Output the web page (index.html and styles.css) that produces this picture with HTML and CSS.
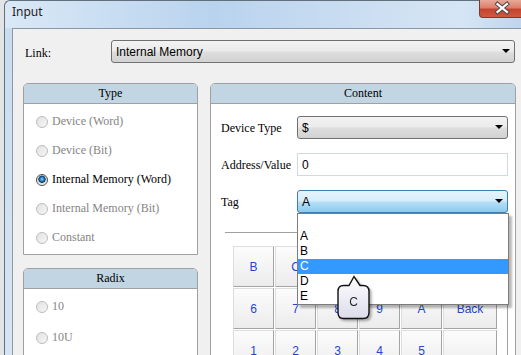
FILE: index.html
```html
<!DOCTYPE html>
<html lang="en">

<head>
    <meta charset="UTF-8">
    <title>Input</title>
    <link rel="stylesheet" href="styles.css">
</head>

<body>
    <div class="window">
        <div class="titlebar">
            <span class="title">Input</span>
            <div class="close">
                <svg width="46" height="18" viewBox="0 0 46 18">
                    <path d="M18.5 5 L28 13 M28 5 L18.5 13" stroke="#4a4a4a" stroke-width="4.2" stroke-linecap="square" fill="none"/>
                    <path d="M18.5 5 L28 13 M28 5 L18.5 13" stroke="#fff" stroke-width="2.2" stroke-linecap="square" fill="none"/>
                </svg>
            </div>
        </div>
        <div class="frame">
            <div class="client">
                <div class="link-row">
                    <span class="link-lbl">Link:</span>
                    <div class="combo link-combo">Internal Memory<i class="arrow"></i></div>
                </div>

                <div class="panels">
                    <div class="left-col">
                        <div class="panel type-panel">
                            <div class="panel-head">Type</div>
                            <div class="panel-body radios">
                                <div class="radio"><span class="dot"></span>Device (Word)</div>
                                <div class="radio"><span class="dot"></span>Device (Bit)</div>
                                <div class="radio on"><span class="dot"></span>Internal Memory (Word)</div>
                                <div class="radio"><span class="dot"></span>Internal Memory (Bit)</div>
                                <div class="radio"><span class="dot"></span>Constant</div>
                            </div>
                        </div>
                        <div class="panel radix-panel">
                            <div class="panel-head">Radix</div>
                            <div class="panel-body radios radix">
                                <div class="radio"><span class="dot"></span>10</div>
                                <div class="radio"><span class="dot"></span>10U</div>
                            </div>
                        </div>
                    </div>

                    <div class="panel content-panel">
                        <div class="panel-head">Content</div>
                        <div class="panel-body form">
                            <div class="field">
                                <span class="flabel">Device Type</span>
                                <div class="combo">$<i class="arrow"></i></div>
                            </div>
                            <div class="field">
                                <span class="flabel">Address/Value</span>
                                <div class="textbox">0</div>
                            </div>
                            <div class="field tag-field">
                                <span class="flabel">Tag</span>
                                <div class="combo hot">A<i class="arrow"></i></div>
                                <ul class="droplist">
                                    <li></li>
                                    <li>A</li>
                                    <li>B</li>
                                    <li class="sel">C</li>
                                    <li>D</li>
                                    <li>E</li>
                                </ul>
                            </div>

                            <div class="keypad">
                                <div class="keys">
                                    <span class="key">B</span>
                                    <span class="key">C</span>
                                    <span class="key">D</span>
                                    <span class="key">E</span>
                                    <span class="key">F</span>
                                    <span class="key"></span>
                                    <span class="key">6</span>
                                    <span class="key">7</span>
                                    <span class="key">8</span>
                                    <span class="key">9</span>
                                    <span class="key">A</span>
                                    <span class="key">Back</span>
                                    <span class="key">1</span>
                                    <span class="key">2</span>
                                    <span class="key">3</span>
                                    <span class="key">4</span>
                                    <span class="key">5</span>
                                    <span class="key"></span>
                                </div>
                            </div>
                        </div>

                        <!-- tooltip of the hovered item -->
                        <div class="callout">
                            <svg width="40" height="50" viewBox="0 0 40 50">
                                <defs>
                                    <linearGradient id="tipfill" x1="0" y1="0" x2="0" y2="1">
                                        <stop offset="0" stop-color="#ffffff"/>
                                        <stop offset="1" stop-color="#dcdcec"/>
                                    </linearGradient>
                                </defs>
                                <path d="M17 1.5 L12 10.5 H6.5 Q1 10.5 1 16.5 V37.5 Q1 43.5 6.5 43.5 H26 Q32 43.5 32 37.5 V16.5 Q32 10.5 26 10.5 H23 Z"
                                      fill="url(#tipfill)" stroke="#111" stroke-width="1.4"/>
                            </svg>
                            <span class="tip-text">C</span>
                        </div>
                    </div>
                </div>
            </div>
        </div>
    </div>
</body>

</html>
```

FILE: styles.css
```css
* {
    box-sizing: border-box;
}

body {
    margin: 0;
    width: 521px;
    height: 355px;
    overflow: hidden;
    background: #e2e4e6;
    font-family: "Liberation Serif", serif;
    font-size: 12px;
}

/* ---------- window frame ---------- */
.window {
    margin-left: 4px;
    width: 521px;
    height: 356px;
    display: flex;
    flex-direction: column;
    border-left: 1px solid #62707e;
    border-top: 1px solid #62707e;
    border-top-left-radius: 6px;
    background: linear-gradient(90deg, #dae8f6 0%, #b9d3ee 40%, #cfe0f2 75%, #d6e5f4 88%, #bcd4ee 100%);
}

.titlebar {
    flex-shrink: 0;
    height: 27px;
    display: flex;
    align-items: flex-start;
}

.title {
    flex: 1;
    padding: 3px 0 0 7px;
    font-family: "Noto Sans", sans-serif;
    font-size: 12px;
    line-height: 16px;
    color: #1e1e1e;
}

.close {
    width: 46px;
    height: 18px;
    margin-top: -1px;
    border: 1px solid #7a3a30;
    border-top: none;
    border-bottom-left-radius: 4px;
    background: linear-gradient(#eaa898, #dc7f6c 45%, #c5432e 55%, #cf5a40);
}

.close svg {
    display: block;
    margin: -1px 0 0 -1px;
}

.frame {
    flex: 1;
    min-height: 0;
    overflow: hidden;
    display: flex;
    padding-left: 7px;
    background: linear-gradient(180deg, #c9dcf0, #d6e5f4);
}

.client {
    flex: 1;
    background: #f0f0f0;
    border-left: 1px solid #8b98a6;
    border-top: 1px solid #8b98a6;
    padding: 11px 0 0 10px;
}

/* ---------- link row ---------- */
.link-row {
    display: flex;
    align-items: center;
    height: 23px;
}

.link-lbl {
    width: 86px;
    margin-left: 2px;
    padding-top: 4px;
    font-size: 12px;
}

.combo {
    position: relative;
    width: 211px;
    height: 23px;
    display: flex;
    align-items: center;
    padding-left: 4px;
    border: 1px solid #707070;
    border-radius: 3px;
    background: linear-gradient(#f3f3f3, #ebebeb 45%, #dddddd 55%, #d2d2d2);
    font-family: "Liberation Sans", sans-serif;
    font-size: 12px;
    color: #000;
}

.link-combo {
    width: 404px;
}

.arrow {
    position: absolute;
    right: 4px;
    top: 8px;
    width: 0;
    height: 0;
    border-left: 4px solid transparent;
    border-right: 4px solid transparent;
    border-top: 4px solid #000;
}

.combo.hot {
    border-color: #3c7fb1;
    background: linear-gradient(#e6f4fc, #d7eefb 45%, #b4def6 55%, #8ccaee);
}

.textbox {
    width: 211px;
    height: 23px;
    display: flex;
    align-items: center;
    padding-left: 4px;
    border: 1px solid #d2d8df;
    background: #fff;
    font-family: "Liberation Sans", sans-serif;
    font-size: 12px;
}

/* ---------- panels ---------- */
.panels {
    display: flex;
    align-items: flex-start;
    gap: 12px;
    margin-top: 20px;
}

.left-col {
    width: 175px;
    display: flex;
    flex-direction: column;
    gap: 13px;
}

.panel {
    border: 1px solid #a0a0a0;
    border-radius: 5px 5px 0 0;
    background: #fff;
}

.panel-head {
    height: 20px;
    line-height: 19px;
    text-align: center;
    background: #c1d5e3;
    border-bottom: 1px solid #a0a0a0;
    border-radius: 4px 4px 0 0;
    font-size: 12px;
    color: #000;
}

.radios {
    padding: 3px 0 2px 12px;
}

.radio {
    height: 29px;
    display: flex;
    align-items: center;
    color: #858585;
    font-size: 12px;
}

.radix {
    padding-top: 2px;
    height: 80px;
}

.radix .radio {
    height: 31px;
}

.dot {
    width: 12px;
    height: 12px;
    margin-right: 4px;
    border-radius: 50%;
    border: 1px solid #bcbcbc;
    background: linear-gradient(135deg, #e2e2e2, #f6f6f6);
}

.radio.on {
    color: #000;
}

.radio.on .dot {
    border-color: #4d4d4d;
    background: radial-gradient(circle at 50% 42%, #9fd3f5 0, #2478b8 2px, #0d3d6a 3.4px, #d8d8d8 3.9px, #f4f4f4 5.5px);
}

/* ---------- content ---------- */
.content-panel {
    position: relative;
    width: 306px;
    height: 290px;
}

.form {
    padding: 12px 7px 0 10px;
}

.field {
    display: flex;
    align-items: center;
    height: 23px;
    margin-bottom: 14px;
}

.flabel {
    width: 76px;
    padding-top: 2px;
    font-size: 12px;
}

.tag-field {
    position: relative;
    margin-bottom: 19px;
}

.droplist {
    position: absolute;
    left: 76px;
    top: 23px;
    z-index: 2;
    width: 212px;
    margin: 0;
    padding: 0;
    list-style: none;
    background: #fff;
    border: 1px solid #7c7c7c;
    box-shadow: 3px 3px 2px rgba(0, 0, 0, 0.28);
    font-family: "Liberation Sans", sans-serif;
    font-size: 12px;
}

.droplist li {
    height: 15px;
    line-height: 15px;
    padding-left: 2px;
    color: #000;
}

.droplist li.sel {
    background: #3399ff;
    color: #fff;
}

.keypad {
    width: 283px;
    margin-left: 4px;
    border-top: 1px solid #a0a0a0;
    border-right: 1px solid #a0a0a0;
    padding: 13px 0 0 8px;
    height: 130px;
}

.keys {
    display: grid;
    grid-template-columns: repeat(5, 41px) 54px;
    grid-auto-rows: 41px;
    gap: 1px;
}

.key {
    display: flex;
    align-items: center;
    justify-content: center;
    border: 1px solid;
    border-color: #dedede #a4a4a4 #a4a4a4 #dedede;
    background: linear-gradient(#fcfcfc, #ececec);
    font-family: "Liberation Sans", sans-serif;
    font-size: 12px;
    color: #2445d4;
}

.callout {
    position: absolute;
    left: 126px;
    top: 191px;
    z-index: 3;
    width: 40px;
    height: 50px;
    filter: drop-shadow(2px 2px 1px rgba(0, 0, 0, 0.3));
}

.callout svg {
    display: block;
}

.tip-text {
    position: absolute;
    left: 1px;
    top: 11px;
    width: 31px;
    height: 32px;
    line-height: 32px;
    text-align: center;
    font-family: "Liberation Sans", sans-serif;
    font-size: 12px;
    color: #2a2a2a;
}
```
